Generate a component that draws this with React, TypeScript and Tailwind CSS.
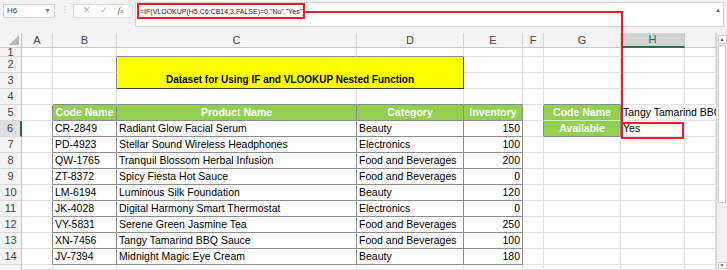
import React from "react";

const rows = [
  ["CR-2849", "Radiant Glow Facial Serum", "Beauty", 150],
  ["PD-4923", "Stellar Sound Wireless Headphones", "Electronics", 100],
  ["QW-1765", "Tranquil Blossom Herbal Infusion", "Food and Beverages", 200],
  ["ZT-8372", "Spicy Fiesta Hot Sauce", "Food and Beverages", 0],
  ["LM-6194", "Luminous Silk Foundation", "Beauty", 120],
  ["JK-4028", "Digital Harmony Smart Thermostat", "Electronics", 0],
  ["VY-5831", "Serene Green Jasmine Tea", "Food and Beverages", 250],
  ["XN-7456", "Tangy Tamarind BBQ Sauce", "Food and Beverages", 100],
  ["JV-7394", "Midnight Magic Eye Cream", "Beauty", 180],
];

const letters = ["A", "B", "C", "D", "E", "F", "G", "H", ""];

// light gridline cell
const grid = "border-r border-b border-[#e1e1e1] bg-white";
// table cell with dark borders
const boxed = "border-r border-b border-[#8c8c8c] bg-white";

function RowHead({ n, active }: { n: React.ReactNode; active?: boolean }) {
  return (
    <div
      className={`flex items-center justify-center border-b border-[#dadada] text-[11px] text-[#444] ${
        active ? "border-r-2 border-r-[#217346] bg-[#e1e1e1]" : "border-r border-r-[#c6c6c6] bg-[#f3f3f3]"
      }`}
    >
      {n}
    </div>
  );
}

function Empty({ dark }: { dark?: "r" | "b" }) {
  if (dark === "r") return <div className="border-r border-b border-r-[#8c8c8c] border-b-[#e1e1e1] bg-white" />;
  if (dark === "b") return <div className="border-r border-b border-r-[#e1e1e1] border-b-[#8c8c8c] bg-white" />;
  return <div className={grid} />;
}

export default function App() {
  return (
    <div
      className="relative h-[270px] w-[727px] overflow-hidden bg-[#f3f3f3]"
      style={{ fontFamily: '"Liberation Sans", Arial, sans-serif' }}
    >
      {/* Formula bar */}
      <div className="flex h-[33px] items-start">
        <div className="ml-[3px] mt-[4px] flex h-[14px] w-[52px] items-center justify-between border border-[#d4d4d4] bg-white px-[3px] text-[8px] text-[#333]">
          <span>H6</span>
          <span className="text-[7px] text-[#777]">▼</span>
        </div>
        <div className="mt-[4px] flex h-[14px] w-[18px] items-center justify-center text-[9px] text-[#bbb]">⋮</div>
        <div className="mt-[4px] flex h-[14px] w-[60px] items-center justify-around border border-[#dcdcdc] bg-white px-1 text-[9px] text-[#b0b0b0]">
          <span>✕</span>
          <span>✓</span>
          <span className="italic text-[#666]" style={{ fontFamily: '"Liberation Serif", serif' }}>
            f<span className="text-[7px]">x</span>
          </span>
        </div>
        <div className="relative ml-[2px] mt-[2px] h-[25px] w-[589px] border border-[#d4d4d4] bg-white">
          <div className="pl-[4px] pt-[4px] text-[7px] leading-[10px] text-[#222]">
            =IF(VLOOKUP(H5,C6:CB14,3,FALSE)=0,"No","Yes")
          </div>
          <span className="absolute right-[2px] top-[3px] text-[6px] text-[#666]">▲</span>
        </div>
      </div>

      {/* Sheet */}
      <div className="flex">
        <div className="grid w-[716px] grid-cols-[22px_31px_64px_240px_107px_59px_21px_77px_64px_31px] grid-rows-[15px_9px_repeat(13,16px)_5px] overflow-hidden text-[10.5px] leading-[15px] text-black">
          {/* column headers */}
          <div className="relative border-r border-b border-[#c6c6c6] bg-[#f3f3f3]">
            <svg className="absolute bottom-[2px] right-[2px]" width="10" height="10" viewBox="0 0 10 10">
              <polygon points="10,0 10,10 0,10" fill="#b8b8b8" />
            </svg>
          </div>
          {letters.map((l, i) =>
            l === "H" ? (
              <div
                key={i}
                className="flex items-center justify-center border-r border-b-2 border-r-[#c6c6c6] border-b-[#217346] bg-[#d3d3d3] text-[11px] text-[#217346]"
              >
                {l}
              </div>
            ) : (
              <div
                key={i}
                className="flex items-center justify-center border-r border-b border-[#d4d4d4] border-b-[#c6c6c6] bg-[#f3f3f3] text-[11px] text-[#444]"
              >
                {l}
              </div>
            )
          )}

          {/* row 1 (partly scrolled off) */}
          <div className="flex items-end justify-center overflow-hidden border-r border-b border-r-[#c6c6c6] border-b-[#dadada] bg-[#f3f3f3] text-[11px] text-[#444]">
            <span className="mb-[-4px] block leading-[16px]">1</span>
          </div>
          <Empty />
          <Empty />
          <Empty dark="b" />
          <Empty dark="b" />
          <Empty />
          <Empty />
          <Empty />
          <Empty />
          <Empty />

          {/* row 2 */}
          <RowHead n={2} />
          <Empty />
          <Empty dark="r" />
          <div className="col-span-2 row-span-2 flex items-end justify-center border-r border-b border-[#3a3a3a] bg-[#ffff00] pb-[1px] text-[10px] font-bold">
            Dataset for Using IF and VLOOKUP Nested Function
          </div>
          <Empty />
          <Empty />
          <Empty />
          <Empty />
          <Empty />

          {/* row 3 */}
          <RowHead n={3} />
          <Empty />
          <Empty dark="r" />
          <Empty />
          <Empty />
          <Empty />
          <Empty />
          <Empty />

          {/* row 4 */}
          <RowHead n={4} />
          <Empty />
          <Empty dark="b" />
          <Empty dark="b" />
          <Empty dark="b" />
          <Empty dark="b" />
          <Empty />
          <Empty dark="b" />
          <Empty />
          <Empty />

          {/* row 5 */}
          <RowHead n={5} />
          <Empty dark="r" />
          <div className="border-r border-b border-[#8c8c8c] bg-[#92d050] text-center font-bold text-white">Code Name</div>
          <div className="border-r border-b border-[#8c8c8c] bg-[#92d050] text-center font-bold text-white">Product Name</div>
          <div className="border-r border-b border-[#8c8c8c] bg-[#92d050] text-center font-bold text-white">Category</div>
          <div className="border-r border-b border-[#8c8c8c] bg-[#92d050] text-center font-bold text-white">Inventory</div>
          <Empty dark="r" />
          <div className="border-r border-b border-r-[#8c8c8c] border-b-[#d8ecc4] bg-[#92d050] text-center font-bold text-white">
            Code Name
          </div>
          <div className="col-span-2 overflow-hidden whitespace-nowrap border-b border-[#e1e1e1] bg-white pl-[2px]">
            Tangy Tamarind BBQ Sauce
          </div>

          {/* row 6 .. 14 */}
          {rows.map((r, i) => (
            <React.Fragment key={i}>
              <RowHead n={i + 6} active={i === 0} />
              <Empty dark="r" />
              <div className={`${boxed} whitespace-nowrap pl-[2px]`}>{r[0]}</div>
              <div className={`${boxed} whitespace-nowrap pl-[2px]`}>{r[1]}</div>
              <div className={`${boxed} whitespace-nowrap pl-[2px]`}>{r[2]}</div>
              <div className={`${boxed} pr-[2px] text-right`}>{r[3]}</div>
              {i === 0 ? (
                <>
                  <Empty dark="r" />
                  <div className="border-r border-b border-[#8c8c8c] bg-[#92d050] text-center font-bold text-white">Available</div>
                  <div className={`${grid} pl-[2px]`}>Yes</div>
                </>
              ) : (
                <>
                  <Empty />
                  <Empty />
                  <Empty />
                </>
              )}
              <Empty />
            </React.Fragment>
          ))}

          {/* row 15 (partly visible) */}
          <div className="border-r border-r-[#c6c6c6] bg-[#f3f3f3]" />
          <Empty />
          <Empty />
          <Empty />
          <Empty />
          <Empty />
          <Empty />
          <Empty />
          <Empty />
          <Empty />
        </div>

        {/* vertical scrollbar */}
        <div className="flex h-[237px] w-[11px] flex-col border-l border-[#d4d4d4] bg-[#f0f0f0]">
          <div className="mx-auto mt-[2px] flex h-[9px] w-[9px] items-center justify-center border border-[#cfcfcf] bg-white text-[5px] text-[#555]">
            ▲
          </div>
          <div className="mx-auto mt-[1px] h-[158px] w-[8px] border border-[#c8c8c8] bg-white" />
          <div className="flex-1" />
          <div className="mx-auto mb-[1px] flex h-[7px] w-[9px] items-center justify-center border border-[#cfcfcf] bg-white text-[5px] text-[#555]">
            ▼
          </div>
        </div>
      </div>

      {/* red callout overlay */}
      <div className="pointer-events-none absolute left-[137px] top-[3px] h-[16px] w-[168px] border-2 border-[#e3202a]" />
      <div className="pointer-events-none absolute left-[303px] top-[11px] h-[2px] w-[320px] bg-[#e3202a]" />
      <div className="pointer-events-none absolute left-[621px] top-[11px] h-[112px] w-[2px] bg-[#e3202a]" />
      <div className="pointer-events-none absolute left-[621px] top-[122px] h-[17px] w-[63px] border-2 border-[#e3202a]" />
    </div>
  );
}
